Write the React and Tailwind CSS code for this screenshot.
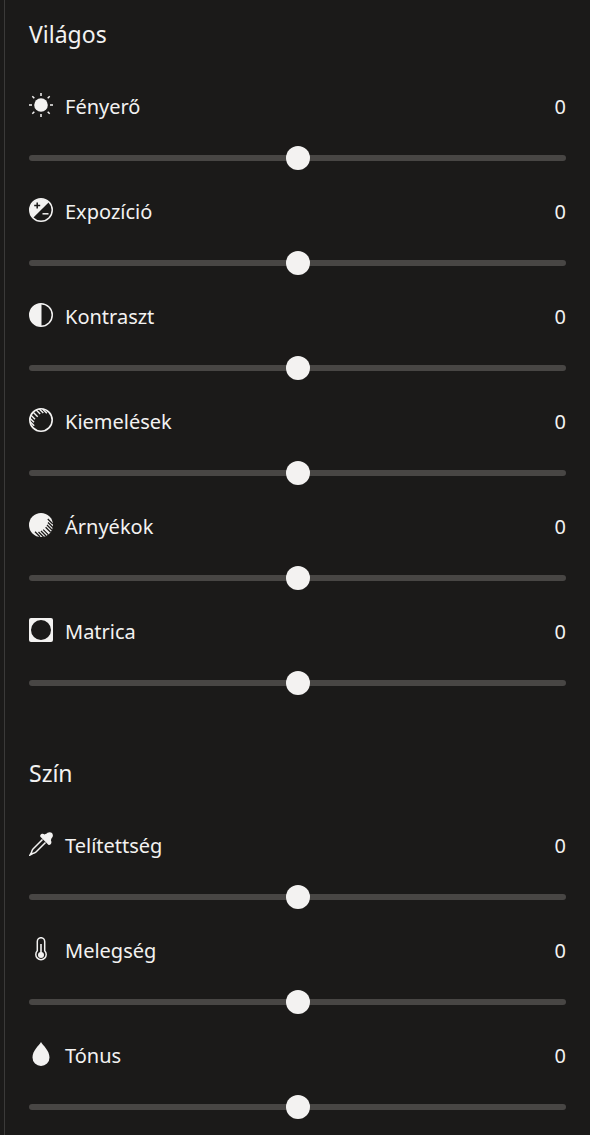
import { useState } from 'react';

const SECTIONS = [
  {
    title: 'Világos',
    items: [
      { id: 'brightness', label: 'Fényerő', Icon: BrightnessIcon },
      { id: 'exposure', label: 'Expozíció', Icon: ExposureIcon },
      { id: 'contrast', label: 'Kontraszt', Icon: ContrastIcon },
      { id: 'highlights', label: 'Kiemelések', Icon: HighlightsIcon },
      { id: 'shadows', label: 'Árnyékok', Icon: ShadowsIcon },
      { id: 'vignette', label: 'Matrica', Icon: VignetteIcon },
    ],
  },
  {
    title: 'Szín',
    items: [
      { id: 'saturation', label: 'Telítettség', Icon: DropperIcon },
      { id: 'warmth', label: 'Melegség', Icon: ThermometerIcon },
      { id: 'tint', label: 'Tónus', Icon: DropIcon },
    ],
  },
];

export default function App() {
  return (
    <div className="min-h-screen bg-[#1b1a19] pl-1 font-['Noto_Sans',sans-serif] text-[#f3f2f1]">
      <aside className="min-h-screen border-l border-[#3b3a39] pt-[19px] pr-6 pb-4 pl-6">
        <div className="flex flex-col gap-[63px]">
          {SECTIONS.map((s) => <Section key={s.title} {...s} />)}
        </div>
      </aside>
    </div>
  );
}

function Section({ title, items }) {
  return (
    <section>
      <h2 className="text-[23px] leading-[30px]">{title}</h2>
      <div className="mt-[43px] flex flex-col gap-[27px]">
        {items.map((item) => <Adjustment key={item.id} {...item} />)}
      </div>
    </section>
  );
}

function Adjustment({ id, label, Icon }) {
  const [value, setValue] = useState(0);

  return (
    <div>
      <div className="flex items-start text-[20px] leading-[30px]">
        <span className="mt-px h-6 w-6 shrink-0"><Icon /></span>
        <label htmlFor={id} className="ml-3 flex-1">{label}</label>
        <output htmlFor={id}>{value}</output>
      </div>
      <input
        id={id}
        type="range"
        min={-100}
        max={100}
        value={value}
        onChange={(e) => setValue(Number(e.target.value))}
        className="mt-6 block h-6 w-full cursor-pointer appearance-none bg-transparent [&::-webkit-slider-runnable-track]:h-[6px] [&::-webkit-slider-runnable-track]:rounded-full [&::-webkit-slider-runnable-track]:bg-[#484644] [&::-webkit-slider-thumb]:-mt-[9px] [&::-webkit-slider-thumb]:h-6 [&::-webkit-slider-thumb]:w-6 [&::-webkit-slider-thumb]:appearance-none [&::-webkit-slider-thumb]:rounded-full [&::-webkit-slider-thumb]:bg-[#f3f2f1]"
      />
    </div>
  );
}

function Svg({ children }) {
  return (
    <svg viewBox="0 0 24 24" className="block h-6 w-6" fill="currentColor" aria-hidden="true">
      {children}
    </svg>
  );
}

function BrightnessIcon() {
  return (
    <Svg>
      <circle cx="12" cy="12" r="6.8" />
      <path
        d="M12 0v3M12 21v3M0 12h3M21 12h3M3.3 3.3l2 2M18.7 18.7l2 2M3.3 20.7l2-2M18.7 5.3l2-2"
        stroke="currentColor"
        strokeWidth="1.5"
      />
    </Svg>
  );
}

function ExposureIcon() {
  return (
    <Svg>
      <circle cx="12" cy="12" r="11.25" fill="none" stroke="currentColor" strokeWidth="1.5" />
      <path d="M19.8 4.2A11 11 0 0 0 4.2 19.8z" />
      <path d="M8.2 4.5v6M5.2 7.5h6" stroke="#1b1a19" strokeWidth="1.5" />
      <path d="M13.5 15.8h6" stroke="currentColor" strokeWidth="1.5" />
    </Svg>
  );
}

function ContrastIcon() {
  return (
    <Svg>
      <circle cx="12" cy="12" r="11.25" fill="none" stroke="currentColor" strokeWidth="1.5" />
      <path d="M12.5 .8H12a11.2 11.2 0 0 0 0 22.4h.5z" />
    </Svg>
  );
}

function HighlightsIcon() {
  return (
    <Svg>
      <circle cx="12" cy="12" r="11.2" fill="none" stroke="currentColor" strokeWidth="1.6" />
      <path
        d="M13.8 1.2l4 4M10.3 1l4 4M7 1.800l4.200 4.200M4.200 4.200l4.500 4.500M1.800 7l4.200 4.200M1 10.300l4 4M1.200 13.800l4 4"
        fill="none"
        stroke="currentColor"
        strokeWidth="1.4"
      />
    </Svg>
  );
}

function ShadowsIcon() {
  return (
    <Svg>
      <circle cx="12" cy="12" r="12" />
      <path
        d="M18.8 6l5 5M19 9.500l5 5M18 12l5 5M16.600 14.200l5 5M14.200 16.600l5 5M12 18l5 5M9.500 19l5 5M6 18.800l5 5"
        fill="none"
        stroke="#1b1a19"
        strokeWidth="1.3"
      />
    </Svg>
  );
}

function VignetteIcon() {
  return (
    <Svg>
      <path
        fillRule="evenodd"
        d="M2 0h20a2 2 0 0 1 2 2v20a2 2 0 0 1-2 2H2a2 2 0 0 1-2-2V2a2 2 0 0 1 2-2zM12 2a10 10 0 1 0 0 20 10 10 0 0 0 0-20z"
      />
    </Svg>
  );
}

function DropperIcon() {
  return (
    <Svg>
      <path d="M15.500 2.500C16.800 1.700 18 1.700 18.500.8 20 .1 21.800 0 23 1c1.100 1.300 1.200 3.200.2 4.600-.8.7-1 1.500-1.300 2.900 1 1.500.5 3.500-.9 4.300-.7.3-1.400.1-1.900-.4l-7.500-7.500c-.5-.5-.6-1.200-.2-1.800.8-1.400 2.700-1.700 4.100-.6z" />
      <path
        d="M13.500 7.500L4 17c-.9.900-1.200 1.900-1.500 3.300L.9 23.100l2.800-1.600c1.400-.3 2.400-.6 3.300-1.500L16.500 10.500"
        fill="none"
        stroke="currentColor"
        strokeWidth="1.5"
      />
    </Svg>
  );
}

function ThermometerIcon() {
  return (
    <Svg>
      <path
        d="M8.300 13.800V4.400a3.700 3.700 0 0 1 7.400 0v9.400a5.200 5.200 0 1 1-7.400 0z"
        fill="none"
        stroke="currentColor"
        strokeWidth="1.5"
      />
      <circle cx="12" cy="18" r="3" />
      <path d="M12 7v10" stroke="currentColor" strokeWidth="1.6" />
    </Svg>
  );
}

function DropIcon() {
  return (
    <Svg>
      <path d="M12 0c2 3.500 8.500 8.500 8.500 15.500a8.500 8.500 0 0 1-17 0C3.500 8.500 10 3.500 12 0z" />
    </Svg>
  );
}
